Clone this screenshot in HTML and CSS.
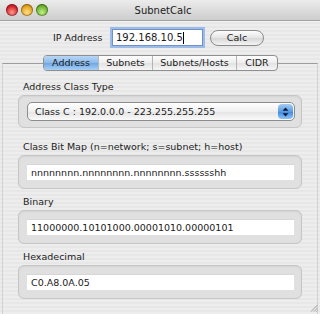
FILE: index.html
```html
<!DOCTYPE html>
<html lang="en">
<head>
    <meta charset="UTF-8">
    <title>SubnetCalc</title>
    <link rel="stylesheet" href="styles.css">
</head>
<body>
    <div class="window">
        <!-- Barra de titulo -->
        <div class="titlebar">
            <div class="lights">
                <span class="light red"></span>
                <span class="light yellow"></span>
                <span class="light green"></span>
            </div>
            <div class="title">SubnetCalc</div>
        </div>

        <div class="content">
            <div class="ip-row">
                <label class="ip-label">IP Address</label>
                <div class="ip-field">192.168.10.5<span class="caret"></span></div>
                <div class="button">Calc</div>
            </div>

            <div class="tabs">
                <div class="tab tab-address selected">Address</div>
                <div class="tab tab-subnets">Subnets</div>
                <div class="tab tab-hosts">Subnets/Hosts</div>
                <div class="tab tab-cidr">CIDR</div>
            </div>

            <div class="tabview">
                <div class="section first">
                    <div class="section-label">Address Class Type</div>
                    <div class="group group-popup">
                        <div class="popup">
                            <span>Class C : 192.0.0.0 - 223.255.255.255</span>
                            <span class="stepper">
                                <svg width="9" height="12" viewBox="0 0 9 12">
                                    <path d="M4.5 1.5 L7.5 4.8 L1.5 4.8 Z" fill="#0a1a3a"/>
                                    <path d="M4.5 10.5 L7.5 7.2 L1.5 7.2 Z" fill="#0a1a3a"/>
                                </svg>
                            </span>
                        </div>
                    </div>
                </div>

                <div class="section">
                    <div class="section-label">Class Bit Map (n=network; s=subnet; h=host)</div>
                    <div class="group">
                        <div class="field">nnnnnnnn.nnnnnnnn.nnnnnnnn.sssssshh</div>
                    </div>
                </div>

                <div class="section">
                    <div class="section-label">Binary</div>
                    <div class="group">
                        <div class="field">11000000.10101000.00001010.00000101</div>
                    </div>
                </div>

                <div class="section">
                    <div class="section-label">Hexadecimal</div>
                    <div class="group">
                        <div class="field">C0.A8.0A.05</div>
                    </div>
                </div>
            </div>
        </div>

        <svg class="grip" width="8" height="8" viewBox="0 0 8 8">
            <path d="M7.5 1 L1 7.5 M7.5 4 L4 7.5 M7.5 6.5 L6.5 7.5" stroke="#8a8a8a" stroke-width="0.8"/>
        </svg>
    </div>
</body>
</html>
```

FILE: styles.css
```css
body {
    margin: 0;
    font-family: "DejaVu Sans", Verdana, sans-serif;
    font-size: 9.5px;
    color: #1a1a1a;
}
.window {
    position: relative;
    width: 320px;
    height: 314px;
    overflow: hidden;
    background: repeating-linear-gradient(#ededed 0, #ededed 2px, #e7e7e7 2px, #e7e7e7 4px);
}

/* Barra de titulo */
.titlebar {
    height: 20px;
    display: flex;
    align-items: center;
    background: linear-gradient(#ececec, #cdcdcd);
    border-bottom: 1px solid #a0a0a0;
    box-shadow: 0 1px 0 #f4f4f4;
}
.lights {
    display: flex;
    gap: 3px;
    padding-left: 6px;
    width: 60px;
}
.light {
    width: 12px;
    height: 12px;
    border-radius: 50%;
    box-shadow: inset 0 0 0 1px rgba(0,0,0,0.3);
}
.red { background: radial-gradient(circle at 50% 70%, #ff9a8e, #d3222a 60%, #8c0f10); }
.yellow { background: radial-gradient(circle at 50% 70%, #ffe08a, #e2a01b 60%, #9a6100); }
.green { background: radial-gradient(circle at 50% 70%, #c4f08a, #6ab12d 60%, #2f6a0d); }
.title {
    flex: 1;
    text-align: center;
    font-size: 10px;
    margin-right: 60px;
    color: #222;
}

/* Fila de IP */
.content {
    padding-top: 8px;
}
.ip-row {
    display: flex;
    align-items: center;
    padding-left: 53px;
}
.ip-label {
    width: 59px;
}
.ip-field {
    width: 86px;
    height: 15px;
    line-height: 15px;
    padding-left: 3px;
    background: #fff;
    border: 1px solid #6f91c9;
    box-shadow: 0 0 0 2px #9cbbe8;
    font-size: 10px;
}
.caret {
    display: inline-block;
    width: 1px;
    height: 12px;
    background: #000;
    vertical-align: middle;
}
.button {
    margin-left: 7px;
    width: 52px;
    height: 14px;
    line-height: 14px;
    text-align: center;
    border: 1px solid #8a8a8a;
    border-radius: 8px;
    background: linear-gradient(#fdfdfd, #e4e4e4 50%, #d6d6d6 51%, #f4f4f4);
}

/* Pestanas */
.tabs {
    display: flex;
    margin: 9px 0 -8px 43px;
    position: relative;
    z-index: 1;
    width: max-content;
    border: 1px solid #8f8f8f;
    border-radius: 4px;
    overflow: hidden;
    background: linear-gradient(#fdfdfd, #ededed 50%, #e2e2e2 51%, #f6f6f6);
}
.tab {
    height: 14px;
    line-height: 14px;
    text-align: center;
    border-left: 1px solid #b5b5b5;
}
.tab:first-child { border-left: none; }
.tab-address { width: 54px; }
.tab-subnets { width: 53px; }
.tab-hosts { width: 83px; }
.tab-cidr { width: 40px; }
.tab.selected {
    background: linear-gradient(#b9d6f5, #8ab9ea 50%, #6da6e3 51%, #a9d0f5);
}
.tabview {
    margin: 0 2px;
    border-top: 1px solid #9d9d9d;
    border-left: 1px solid #d2d2d2;
    border-right: 1px solid #d2d2d2;
    padding: 16px 15px 0 15px;
    height: 260px;
}

/* Secciones */
.section {
    margin-bottom: 6px;
}
.section.first {
    margin-bottom: 12px;
}
.section-label {
    padding-left: 5px;
    height: 13px;
    line-height: 13px;
    margin-bottom: 2px;
    color: #222;
}
.group {
    border: 1px solid #c6c6c6;
    border-radius: 6px;
    background: #e0e0e0;
    padding: 8px 7px 8px 8px;
    box-shadow: inset 0 1px 2px rgba(0,0,0,0.06);
}
.group-popup {
    padding: 6px 6px 6px 8px;
}
.field {
    background: #fff;
    height: 15px;
    line-height: 15px;
    padding-left: 4px;
    border-top: 1px solid #d6d6d6;
}
.popup {
    display: flex;
    align-items: center;
    height: 17px;
    padding-left: 7px;
    border: 1px solid #8c8c8c;
    border-radius: 5px;
    background: linear-gradient(#ffffff, #f0f0f0 50%, #e4e4e4 51%, #fafafa);
}
.popup span:first-child { flex: 1; }
.stepper {
    width: 15px;
    height: 15px;
    margin-right: 1px;
    border-radius: 4px;
    display: flex;
    align-items: center;
    justify-content: center;
    background: linear-gradient(#a6cdf4, #5a9be3 50%, #3f86db 51%, #8cc3f4);
}
.grip {
    position: absolute;
    right: 2px;
    bottom: 2px;
}
```
